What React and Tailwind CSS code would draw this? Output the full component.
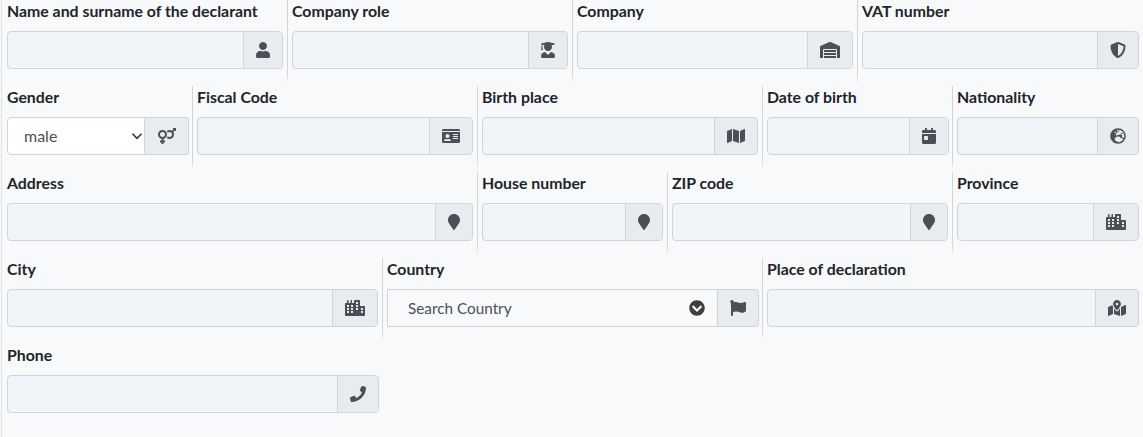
import React from "react";
import { FaUser, FaUserGraduate, FaWarehouse, FaShieldAlt, FaVenusMars, FaIdCard, FaMap, FaCalendarDay, FaGlobeEurope, FaMapMarker, FaCity, FaChevronCircleDown, FaFlag, FaMapMarkedAlt, FaPhone } from "react-icons/fa";

const cellBase = "mb-[3px] h-[83px] border-l [border-image:linear-gradient(to_bottom,#d3d6d9_88%,#f8f9fa)_1]";
const labelBase = "h-[31px] pt-[1px] text-[15.85px] leading-[20px] font-bold text-[#212529] whitespace-nowrap";

function Field({ span, label, icon: Icon, size = 16, pr = "pr-[4px]", first, addon }) {
  return (
    <div className={`${span} ${pr} pl-[4px] ${cellBase} ${first ? "border-transparent [border-image:none]" : ""}`}>
      <div className={labelBase}>{label}</div>
      <div className="flex h-[38px] overflow-hidden rounded-[4px] border border-[#ced4da] bg-[#f1f4f8]">
        <div className="flex-1" />
        <span className={`flex ${addon} shrink-0 items-center justify-center border-l border-[#ced4da] bg-[#e9ecef] text-[#495057]`}>
          <Icon size={size} />
        </span>
      </div>
    </div>
  );
}

export default function App() {
  return (
    <div className="min-h-[437px] bg-[#f8f9fa] pl-[1px] font-['Lato',sans-serif] text-[#495057]">
      <div className="min-h-[437px] border-l border-[#dfe2e5]">
        <div className="grid w-[1140px] grid-cols-12">
          <Field first span="col-span-3" label="Name and surname of the declarant" icon={FaUser} addon="w-[39px]" />
          <Field span="col-span-3" label="Company role" icon={FaUserGraduate} addon="w-[39px]" />
          <Field span="col-span-3" label="Company" icon={FaWarehouse} size={20} addon="w-[45px]" />
          <Field span="col-span-3" pr="pr-[3px]" label="VAT number" icon={FaShieldAlt} addon="w-[41px]" />

          <div className="col-span-2 pl-[5px] pr-[3px]">
            <div className={labelBase}>Gender</div>
            <div className="flex h-[38px]">
              <div className="flex flex-1 items-center justify-between rounded-l-[4px] border border-[#ced4da] bg-white pl-[16px] pr-[1px] text-[16px]">
                <span>male</span>
                <svg width="12" height="12" viewBox="0 0 16 16" fill="none" stroke="#343a40" strokeWidth="2.2"><path d="M2 5l6 6 6-6" /></svg>
              </div>
              <span className="flex w-[44px] items-center justify-center rounded-r-[4px] border border-l-0 border-[#ced4da] bg-[#e9ecef] text-[#495057]"><FaVenusMars size={18} /></span>
            </div>
          </div>
          <Field span="col-span-3" label="Fiscal Code" icon={FaIdCard} size={18} addon="w-[43px]" />
          <Field span="col-span-3" label="Birth place" icon={FaMap} size={18} addon="w-[43px]" />
          <Field span="col-span-2" pr="pr-[3px]" label="Date of birth" icon={FaCalendarDay} addon="w-[39px]" />
          <Field span="col-span-2" pr="pr-[3px]" label="Nationality" icon={FaGlobeEurope} addon="w-[41px]" />

          <Field first span="col-span-5" label="Address" icon={FaMapMarker} addon="w-[37px]" />
          <Field span="col-span-2" label="House number" icon={FaMapMarker} addon="w-[37px]" />
          <Field span="col-span-3" label="ZIP code" icon={FaMapMarker} addon="w-[37px]" />
          <Field span="col-span-2" pr="pr-[3px]" label="Province" icon={FaCity} size={20} addon="w-[45px]" />

          <Field first span="col-span-4" label="City" icon={FaCity} size={20} addon="w-[45px]" />
          <div className={`col-span-4 pl-[4px] pr-[3px] ${cellBase}`}>
            <div className={labelBase}>Country</div>
            <div className="flex h-[38px]">
              <div className="flex flex-1 items-center justify-between border border-[#ced4da] bg-[#f8f9fa] pl-[20px] pr-[12px] text-[15.3px]">
                <span>Search Country</span>
                <FaChevronCircleDown size={16} className="text-[#3f3f3f]" />
              </div>
              <span className="flex w-[41px] items-center justify-center rounded-r-[4px] border border-l-0 border-[#ced4da] bg-[#e9ecef] text-[#495057]"><FaFlag size={16} /></span>
            </div>
          </div>
          <Field span="col-span-4" pr="pr-[3px]" label="Place of declaration" icon={FaMapMarkedAlt} size={18} addon="w-[43px]" />

          <Field first span="col-span-4" pr="pr-[3px]" label="Phone" icon={FaPhone} addon="w-[41px]" />
        </div>
      </div>
    </div>
  );
}
